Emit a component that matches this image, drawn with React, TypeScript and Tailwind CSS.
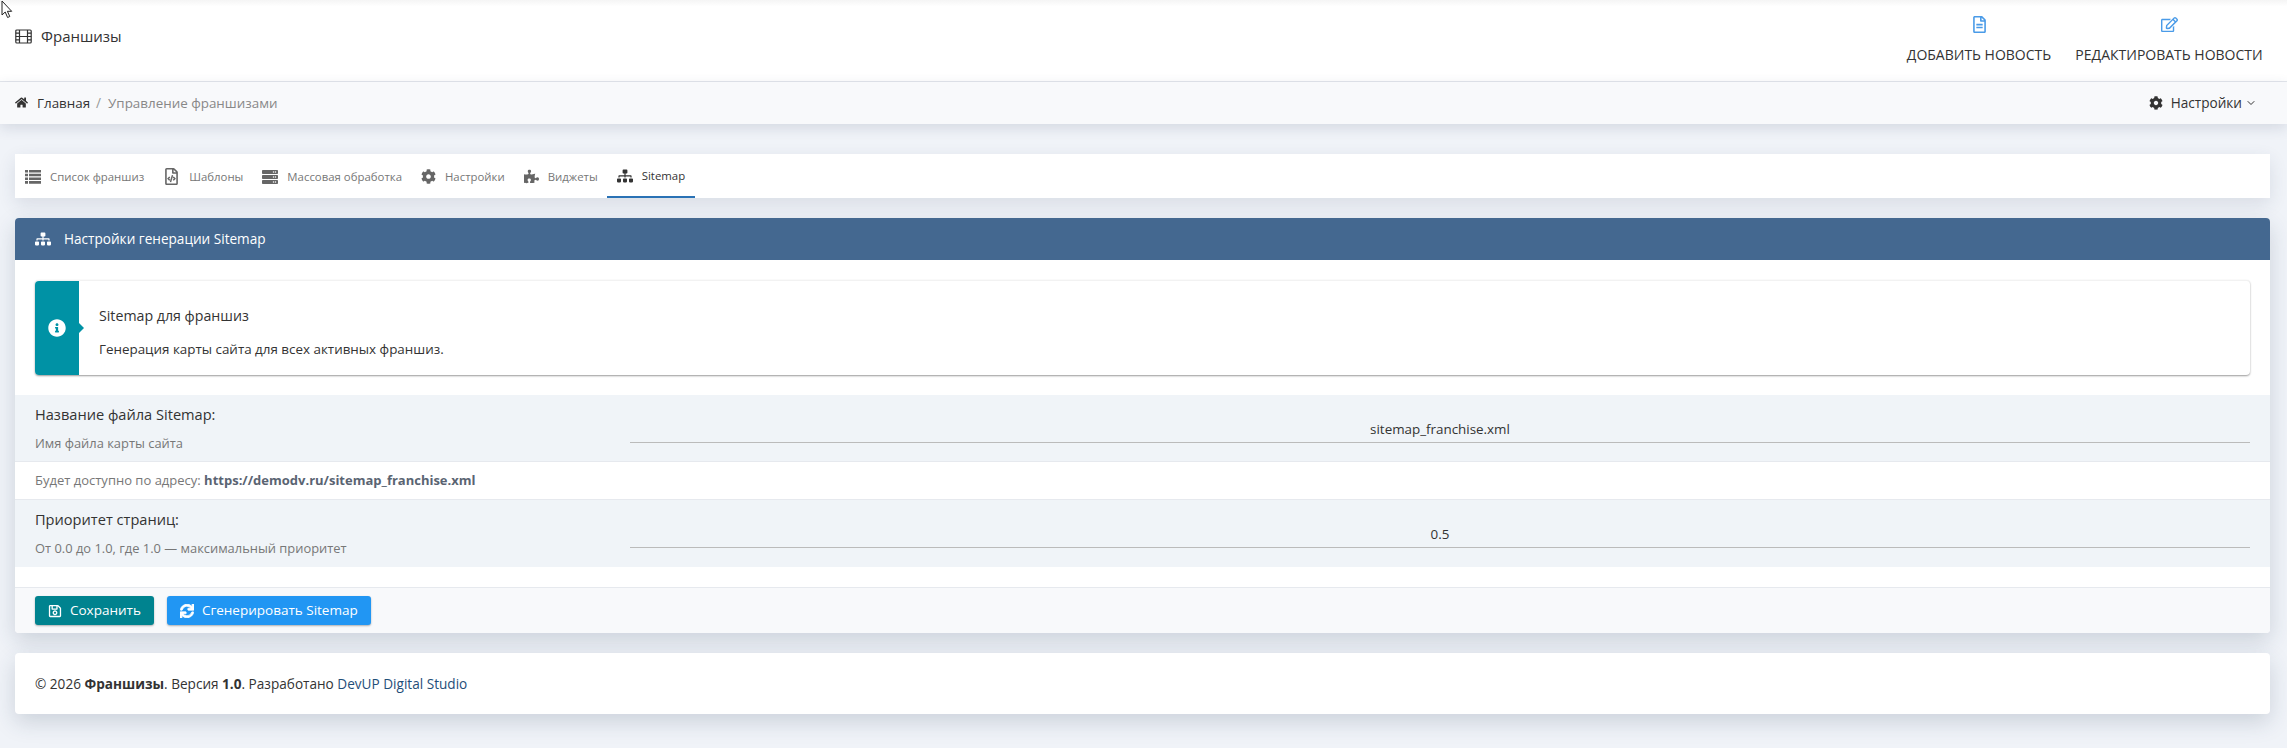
import { ChevronDown } from 'lucide-react';
import { FaHome, FaCog, FaRegFileCode, FaServer, FaPuzzlePiece, FaSitemap, FaInfoCircle, FaRegSave, FaSync, FaRegEdit, FaRegFileAlt } from 'react-icons/fa';

function ListIcon() {
  return (
    <svg width="16" height="14" viewBox="0 0 16 14" fill="currentColor">
      <path d="M0 0h3v2.6H0zM4 0h12v2.6H4zM0 3.7h3v2.6H0zM4 3.7h12v2.6H4zM0 7.4h3V10H0zM4 7.4h12V10H4zM0 11.1h3v2.6H0zM4 11.1h12v2.6H4z" />
    </svg>
  );
}

const tabs = [
  { label: 'Список франшиз', icon: <ListIcon /> },
  { label: 'Шаблоны', icon: <FaRegFileCode className="text-[17px]" /> },
  { label: 'Массовая обработка', icon: <FaServer className="text-[16px]" /> },
  { label: 'Настройки', icon: <FaCog className="text-[15px]" /> },
  { label: 'Виджеты', icon: <FaPuzzlePiece className="text-[15px]" /> },
];

function FilmIcon() {
  return (
    <svg width="17" height="15" viewBox="0 0 17 15" fill="none" stroke="#333" strokeWidth="1.2">
      <rect x="0.8" y="1" width="15.4" height="13" rx="1" />
      <path d="M4.5 1v13M12.5 1v13M4.5 7.5h8M0.8 4.2h3.7M0.8 7.5h3.7M0.8 10.8h3.7M12.5 4.2h3.7M12.5 7.5h3.7M12.5 10.8h3.7" />
    </svg>
  );
}

function FieldRow({ title, hint, value, tall }: { title: string; hint: string; value: string; tall?: boolean }) {
  return (
    <div className={tall ? 'flex h-[67px] items-start bg-[#f0f4f8] px-5 pt-[10px]' : 'flex h-[66px] items-start bg-[#f0f4f8] px-5 pt-[10px]'}>
      <div className="w-[595px] shrink-0">
        <div className="-mt-[1px] text-[14.6px] leading-[20px] text-[#333]">{title}</div>
        <div className="mt-[10px] text-[12.9px] leading-[18px] text-[#777]">{hint}</div>
      </div>
      <div className="mt-[13px] h-[25px] flex-1 border-b border-[#bbb] pt-[1px] text-center text-[13.4px] leading-[20px] text-[#333]">{value}</div>
    </div>
  );
}

export default function App() {
  return (
    <div className="relative min-h-[748px] bg-[#f0f3f8] font-['Open_Sans',sans-serif] text-[13.6px] text-[#333]">
      {/* mouse pointer from the capture */}
      <svg className="absolute left-0 top-0" width="14" height="20" viewBox="0 0 14 20" fill="#fff" stroke="#222" strokeWidth="1">
        <path d="M2 1v14l3.2-3 2.4 5.5 2.2-1-2.4-5.2h4.3z" />
      </svg>

      <header className="flex h-[82px] items-start justify-between border-b border-[#e3e6ec] bg-gradient-to-b from-[#f5f5f5] from-0% to-white to-[8%] pl-[15px] pr-[8px]">
        <div className="mt-[26px] flex items-center gap-[9px] text-[15px] leading-[20px] text-[#333]">
          <FilmIcon />
          <span>Франшизы</span>
        </div>
        <div className="flex pr-[12px]">
          <a className="flex w-[184px] flex-col items-center pt-[16px] text-[14px] text-[#333]">
            <FaRegFileAlt className="text-[17px] text-[#4a9be8]" />
            <span className="mt-[12px] leading-[20px]">ДОБАВИТЬ НОВОСТЬ</span>
          </a>
          <a className="flex w-[196px] flex-col items-center pt-[16px] text-[14px] text-[#333]">
            <FaRegEdit className="text-[17px] text-[#4a9be8]" />
            <span className="mt-[12px] leading-[20px]">РЕДАКТИРОВАТЬ НОВОСТИ</span>
          </a>
        </div>
      </header>

      <div className="flex h-[42px] items-center justify-between bg-[#f8f9fb] pl-[15px] pr-[30px] shadow-[0_4px_14px_rgba(40,60,90,0.14)]">
        <div className="flex items-center">
          <FaHome className="mr-[5px] text-[13px] text-[#333]" />
          <span className="ml-[4px] text-[13.4px] text-[#333]">Главная</span>
          <span className="mx-[6px] text-[#999]">/</span>
          <span className="ml-[1px] text-[13.4px] text-[#888]">Управление франшизами</span>
        </div>
        <div className="flex items-center text-[#333]">
          <FaCog className="mr-[8px] text-[14px]" />
          <span>Настройки</span>
          <ChevronDown size={12} strokeWidth={2} className="ml-[3px]" />
        </div>
      </div>

      <main className="pl-[15px] pr-[17px] pt-[30px]">
        <nav className="flex h-[44px] items-stretch bg-white pl-[10px] shadow-[0_6px_18px_rgba(40,60,90,0.12)]">
          {tabs.map((tab) => (
            <a key={tab.label} className="mr-[19px] flex items-center gap-[9px] pt-[1px] text-[11.4px] text-[#777]">
              <span className="text-[#666]">{tab.icon}</span>
              {tab.label}
            </a>
          ))}
          <a className="-ml-[10px] flex items-center gap-[9px] border-b-2 border-[#2a72b5] px-[10px] pt-[2px] text-[11.4px] text-[#333]">
            <FaSitemap className="text-[16px] text-[#333]" />
            Sitemap
          </a>
        </nav>

        <section className="mt-[20px] rounded-[4px] bg-white shadow-[0_8px_22px_rgba(40,60,90,0.18)]">
          <div className="flex h-[42px] items-center rounded-t-[4px] bg-[#446890] pl-[20px] text-white">
            <FaSitemap className="mr-[13px] text-[16px]" />
            Настройки генерации Sitemap
          </div>

          <div className="px-5 pb-5 pt-5">
            <div className="flex h-[95px] rounded-[4px] border-t border-[#f2f2f2] bg-white shadow-[0_1px_2px_rgba(0,0,0,0.4)]">
              <div className="relative flex w-[44px] items-center justify-center rounded-l-[4px] bg-[#0092a5]">
                <FaInfoCircle className="mb-[1px] text-[18px] text-white" />
                <span className="absolute right-[-5px] top-1/2 h-0 w-0 -translate-y-1/2 border-y-[5px] border-l-[5px] border-y-transparent border-l-[#0092a5]" />
              </div>
              <div className="pl-[20px] pt-[25px]">
                <div className="text-[14.2px] leading-[20px] text-[#333]">Sitemap для франшиз</div>
                <div className="mt-[14px] text-[13.4px] leading-[18px] text-[#333]">Генерация карты сайта для всех активных франшиз.</div>
              </div>
            </div>
          </div>

          <FieldRow title="Название файла Sitemap:" hint="Имя файла карты сайта" value="sitemap_franchise.xml" />
          <div className="flex h-[39px] items-center border-y border-[#e6e9ee] bg-white px-5 pt-[1px] text-[13px] text-[#777]">
            Будет доступно по адресу:&nbsp;<b className="font-bold text-[#5a6472]">https://demodv.ru/sitemap_franchise.xml</b>
          </div>
          <FieldRow tall title="Приоритет страниц:" hint="От 0.0 до 1.0, где 1.0 — максимальный приоритет" value="0.5" />
          <div className="h-[20px]" />

          <div className="flex h-[46px] items-center gap-[13px] rounded-b-[4px] border-t border-[#e6e9ee] bg-[#f8f9fb] px-5">
            <button className="flex h-[29px] items-center gap-[8px] rounded-[3px] bg-[#00838f] px-[13px] text-[13.5px] text-white shadow-[0_1px_2px_rgba(0,0,0,0.3)]">
              <FaRegSave className="text-[14px]" />
              Сохранить
            </button>
            <button className="flex h-[29px] items-center gap-[8px] rounded-[3px] bg-[#2196f3] px-[13px] text-[13.5px] text-white shadow-[0_1px_2px_rgba(0,0,0,0.3)]">
              <FaSync className="text-[14px]" stroke="currentColor" strokeWidth={30} />
              Сгенерировать Sitemap
            </button>
          </div>
        </section>

        <footer className="mt-[20px] flex h-[61px] items-center rounded-[4px] bg-white px-5 pt-[2px] text-[13.6px] text-[#333] shadow-[0_8px_22px_rgba(40,60,90,0.18)]">
          ©&nbsp;2026&nbsp;<b>Франшизы</b>. Версия&nbsp;<b>1.0</b>. Разработано&nbsp;<a className="text-[#1f4e79]">DevUP Digital Studio</a>
        </footer>
      </main>
    </div>
  );
}
